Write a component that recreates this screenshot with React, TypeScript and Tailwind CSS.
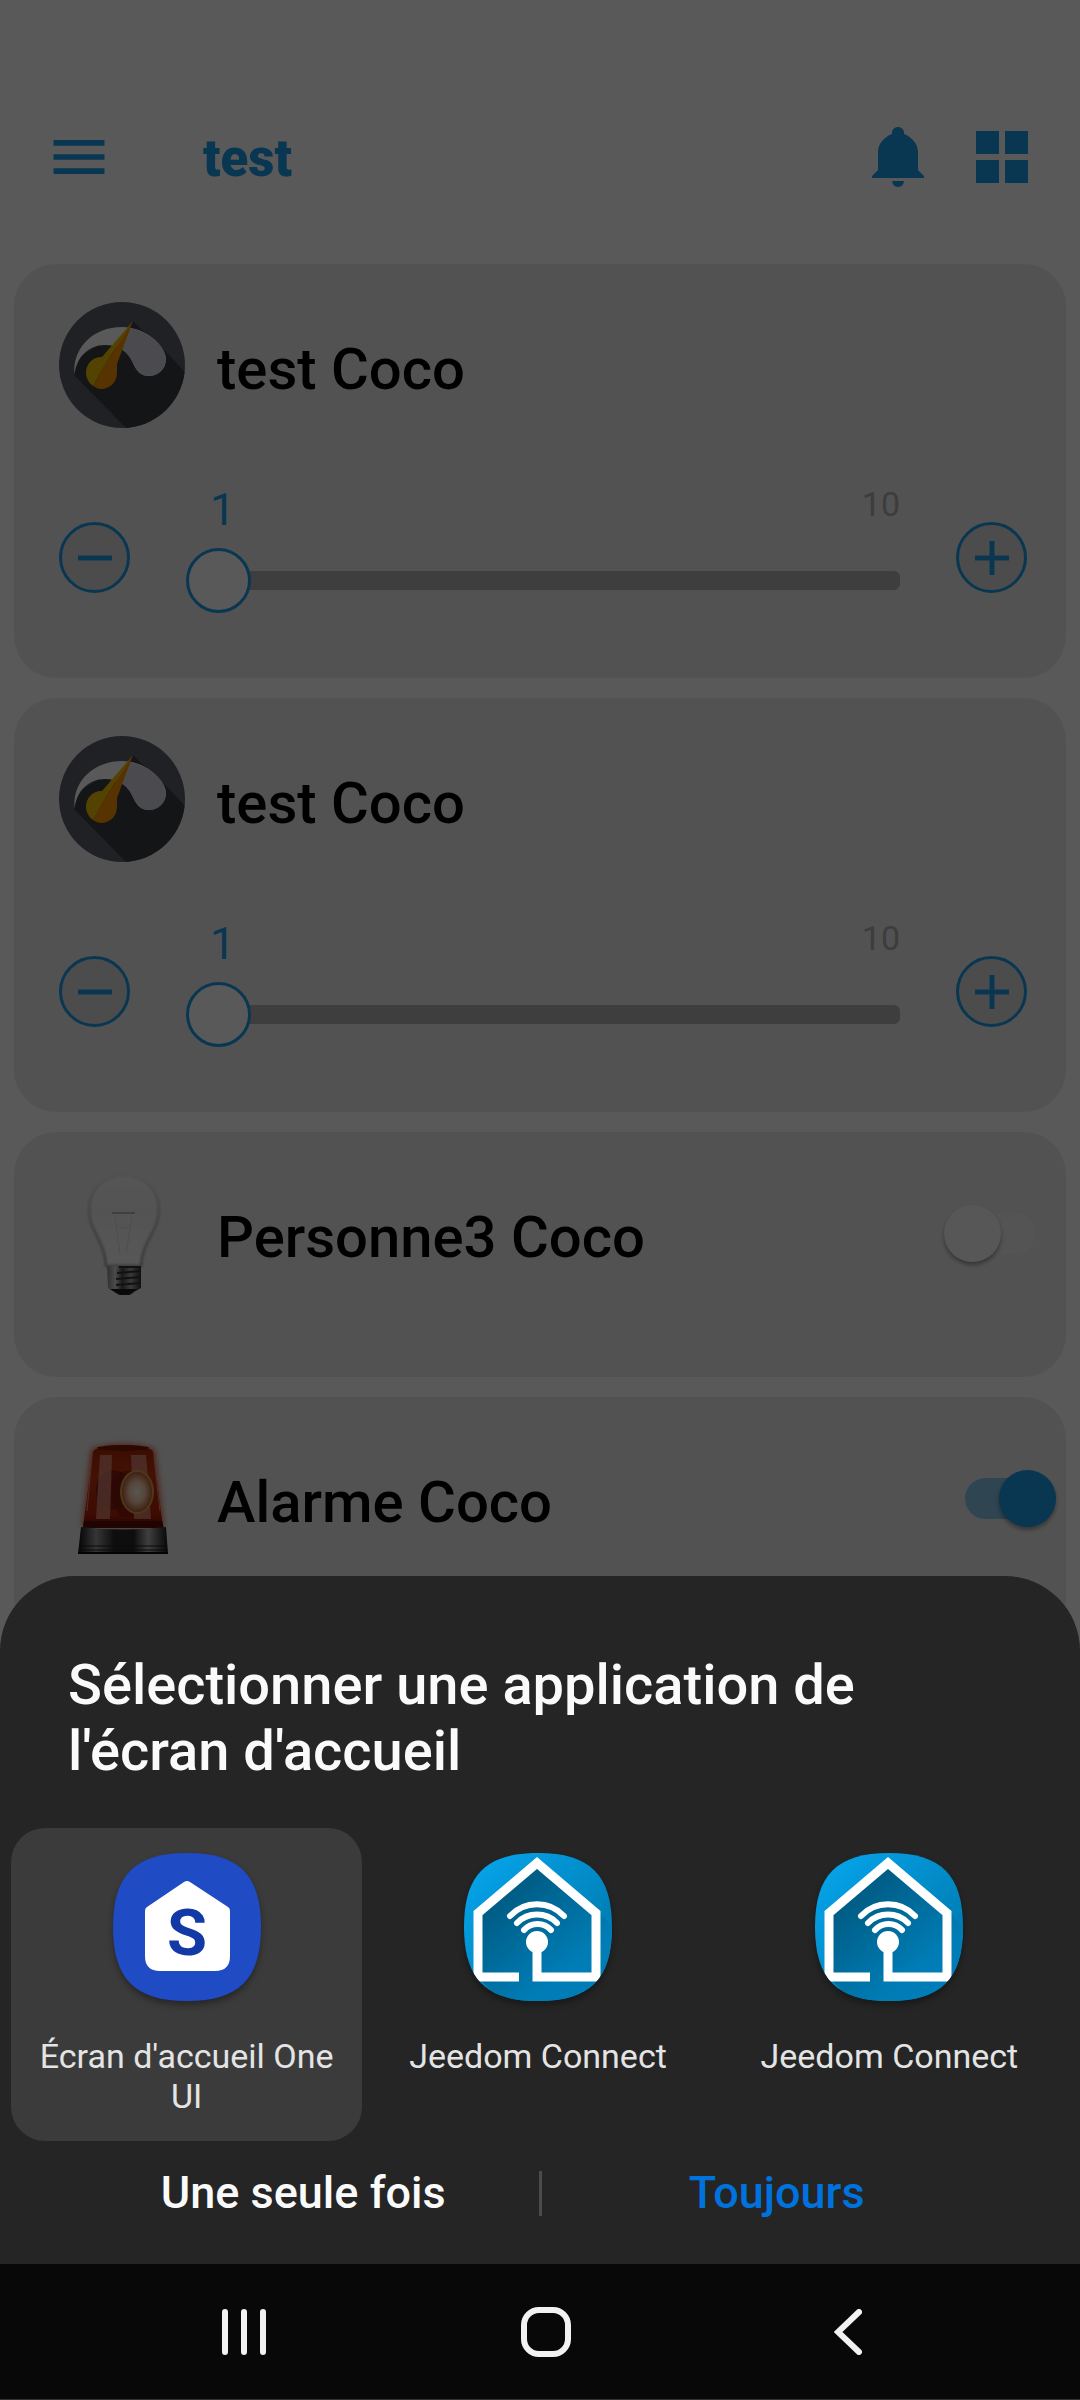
import { useState, type ReactNode } from "react";

function GaugeIcon() {
  return (
    <svg viewBox="0 0 126 126" className="size-[126px] shrink-0" aria-hidden="true">
      <defs>
        <clipPath id="gauge-disc">
          <circle cx="63" cy="63" r="63" />
        </clipPath>
      </defs>
      <g clipPath="url(#gauge-disc)">
        <rect width="126" height="126" fill="#5d5f6a" />
        <path d="M74 19L82 27L107 50L128 72V128H69L15 73L20 55L45 40L68 30Z" fill="#3a3c3f" />
        <path
          d="M15.500 73C13 46 34 25 63 25C88 25 107 45 107 57C107 67 99 74 90 74C81 74 77 68 73 59C68 49 59 43 46 43C29 43 17 56 15.500 73Z"
          fill="#ffffff"
        />
        <path
          d="M71 26C91 30 107 46 107 57C107 67 99 74 90 74C81 74 77 68 73 59C70 53 67 50 62 47Z"
          fill="#d6d8e2"
        />
        <path d="M74 19L43 55C33 55 27 62 27 71C27 76 30 81 34 84L50 56Z" fill="#f0c000" />
        <path d="M74 19L50 56L34 84C37 86 40 87 42 87C51 87 58 80 58 71V62Z" fill="#f59200" />
      </g>
    </svg>
  );
}

function BulbIcon() {
  return (
    <svg viewBox="0 0 126 126" className="size-[126px] shrink-0" aria-hidden="true">
      <defs>
        <linearGradient id="bulb-glass" x1="0" y1="0" x2="0" y2="1">
          <stop offset="0" stopColor="#f4f4f4" />
          <stop offset="0.4" stopColor="#eeeeee" />
          <stop offset="1" stopColor="#fafafa" />
        </linearGradient>
        <linearGradient id="bulb-edge" x1="0" y1="0" x2="0" y2="1">
          <stop offset="0" stopColor="#e6e6e6" />
          <stop offset="0.4" stopColor="#c4c4c4" />
          <stop offset="1" stopColor="#a8a8a8" />
        </linearGradient>
        <linearGradient id="bulb-cap" x1="0" x2="1">
          <stop offset="0" stopColor="#8a8a8a" />
          <stop offset="0.25" stopColor="#d8d8d8" />
          <stop offset="0.45" stopColor="#4a4a4a" />
          <stop offset="0.7" stopColor="#a5a5a5" />
          <stop offset="1" stopColor="#2e2e2e" />
        </linearGradient>
        <filter id="bulb-soften" x="-10%" y="-10%" width="120%" height="120%">
          <feGaussianBlur stdDeviation="1.2" />
        </filter>
      </defs>
      <path
        d="M65 5C86 5 100 20 100 40C100 61 83 71 82 96H47C46 71 30 61 30 40C30 20 44 5 65 5Z"
        fill="url(#bulb-glass)"
        stroke="url(#bulb-edge)"
        strokeWidth="3"
        filter="url(#bulb-soften)"
      />
      <path d="M53 43H76" stroke="#b4b4b4" strokeWidth="2" />
      <path d="M56 47L61 84M73 47L67 84M60 58H70" stroke="#dddddd" strokeWidth="1" fill="none" />
      <path d="M48 96H82V118L75 122L72 125H60L55 122L49 118Z" fill="url(#bulb-cap)" />
      <path d="M60 97H82M58 103L82 101M57 109L82 107M57 115L82 113" stroke="#333333" strokeWidth="2" />
      <path d="M51 119H79L73 123L70 125H61L57 123Z" fill="#1c1c1c" />
    </svg>
  );
}

function SirenIcon() {
  return (
    <svg viewBox="0 0 126 126" className="size-[126px] shrink-0" aria-hidden="true">
      <defs>
        <linearGradient id="siren-dome" x1="0" x2="0" y1="0" y2="1">
          <stop offset="0" stopColor="#a62300" />
          <stop offset="0.35" stopColor="#c03410" />
          <stop offset="0.85" stopColor="#b02208" />
          <stop offset="1" stopColor="#6b0a00" />
        </linearGradient>
        <radialGradient id="siren-lamp">
          <stop offset="0" stopColor="#fff6e6" />
          <stop offset="0.5" stopColor="#f3c8a8" />
          <stop offset="1" stopColor="#b4502c" />
        </radialGradient>
        <linearGradient id="siren-base" x1="0" x2="1">
          <stop offset="0" stopColor="#0c0c0c" />
          <stop offset="0.2" stopColor="#9a9a9a" />
          <stop offset="0.4" stopColor="#2c2a28" />
          <stop offset="0.62" stopColor="#2c2a28" />
          <stop offset="0.78" stopColor="#b4b4b4" />
          <stop offset="1" stopColor="#141414" />
        </linearGradient>
        <filter id="siren-glow" x="-20%" y="-20%" width="140%" height="140%">
          <feGaussianBlur stdDeviation="3" />
        </filter>
      </defs>
      <path d="M32 14Q64 4 96 14L105 92H23Z" fill="#d9604a" filter="url(#siren-glow)" />
      <path d="M34 17C36 8 92 8 94 17L104 92H24Z" fill="url(#siren-dome)" />
      <ellipse cx="64" cy="13" rx="26" ry="3" fill="#7c1c04" />
      <ellipse cx="54" cy="55" rx="17" ry="20" fill="#8a1a10" />
      <path d="M64 36C50 42 48 66 62 82H76V36Z" fill="#7a1208" opacity="0.6" />
      <path d="M41 20H53L51 84H37Z" fill="#e79a8c" opacity="0.7" />
      <path d="M72 20H87L92 84H75Z" fill="#e79a8c" opacity="0.7" />
      <path d="M33 22L28 76M95 22L101 76" stroke="#e88470" strokeWidth="1" />
      <ellipse cx="78" cy="57" rx="16" ry="21" fill="url(#siren-lamp)" stroke="#d8a04c" strokeWidth="2" />
      <path d="M25 86H103L105 93H24Z" fill="#5c0c04" />
      <path d="M22 92Q64 97 107 92L109 119H19Z" fill="url(#siren-base)" />
      <path d="M20 111H108M20 115H109" stroke="#1c1c1c" strokeWidth="1" />
      <path d="M19 118H109" stroke="#0a0a0a" strokeWidth="2" />
    </svg>
  );
}

function BellIcon() {
  return (
    <svg viewBox="0 0 52 60" className="h-[60px] w-[52px]" fill="currentColor" aria-hidden="true">
      <path d="M26 0A6 6 0 0 1 32 7C40 10 46 17 46 25V43L52 49V51H0V49L6 43V25C6 17 12 10 20 7A6 6 0 0 1 26 0Z" />
      <path d="M20 54H32A6 6 0 0 1 20 54Z" />
    </svg>
  );
}

function AppIconOneUi() {
  return (
    <svg viewBox="0 0 148 148" className="size-[148px] drop-shadow-[0_4px_3px_rgba(0,0,0,0.35)]" aria-hidden="true">
      <path d="M74 0C126 0 148 22 148 74S126 148 74 148 0 126 0 74 22 0 74 0Z" fill="#1f4bc5" />
      <path
        d="M71 29Q74 27 77 29L115 54Q117 55 117 58V103Q117 118 102 118H47Q32 118 32 103V58Q32 55 34 54Z"
        fill="#ffffff"
      />
      <text x="74" y="102" textAnchor="middle" fontSize="65" className="fill-[#1239a5] font-bold">
        S
      </text>
    </svg>
  );
}

function AppIconJeedom({ id }: { id: string }) {
  return (
    <svg viewBox="0 0 148 148" className="size-[148px] drop-shadow-[0_4px_3px_rgba(0,0,0,0.35)]" aria-hidden="true">
      <defs>
        <linearGradient id={`${id}-sky`} x1="0" y1="0" x2="1" y2="1">
          <stop offset="0.1" stopColor="#05a2e8" />
          <stop offset="0.7" stopColor="#0080b8" />
        </linearGradient>
        <linearGradient id={`${id}-shade`} x1="0" y1="0" x2="0.8" y2="1">
          <stop offset="0.1" stopColor="#005478" />
          <stop offset="0.8" stopColor="#007db6" />
        </linearGradient>
        <clipPath id={`${id}-clip`}>
          <path d="M74 0C126 0 148 22 148 74S126 148 74 148 0 126 0 74 22 0 74 0Z" />
        </clipPath>
      </defs>
      <g clipPath={`url(#${id}-clip)`}>
        <rect width="148" height="148" fill={`url(#${id}-sky)`} />
        <path d="M14 60L73 9L132 58L148 72V148H38L14 125Z" fill={`url(#${id}-shade)`} />
        <g fill="none" stroke="#ffffff">
          <path d="M55 124H14V60L73 10L132 60V124H73V90" strokeWidth="9" />
          <g strokeWidth="6" strokeLinecap="round">
            <path d="M46 63A37 37 0 0 1 100 63" />
            <path d="M53 70A28 28 0 0 1 93 70" />
            <path d="M60 77A18 18 0 0 1 87 77" />
          </g>
        </g>
        <circle cx="73" cy="89" r="11" fill="#ffffff" />
      </g>
    </svg>
  );
}

function Card({ children, className }: { children: ReactNode; className: string }) {
  return <section className={`rounded-[42px] bg-[#ececec] pt-[38px] pl-[45px] ${className}`}>{children}</section>;
}

function CardHeading({ icon, title }: { icon: ReactNode; title: string }) {
  return (
    <div className="flex min-w-0 flex-1 items-center gap-8">
      {icon}
      <h2 className="pt-2 text-[58px] leading-[66px] font-medium text-black">{title}</h2>
    </div>
  );
}

const roundButton =
  "mb-5 flex size-[71px] shrink-0 items-center justify-center rounded-full border-3 border-[#1c9de9] bg-[#dadada] text-[#1c9de9]";

function SliderCard({ title }: { title: string }) {
  const [value, setValue] = useState(1);
  return (
    <Card className="pr-[39px] pb-[65px]">
      <CardHeading icon={<GaugeIcon />} title={title} />
      <div className="mt-14 flex items-end gap-14">
        <button className={roundButton} aria-label="Diminuer" onClick={() => setValue(Math.max(1, value - 1))}>
          <svg viewBox="0 0 34 34" className="size-[34px]" stroke="currentColor" strokeWidth="5" aria-hidden="true">
            <path d="M0 17H34" />
          </svg>
        </button>
        <div className="min-w-0 flex-1">
          <div className="flex h-16 items-start justify-between pl-6">
            <output className="text-[45px] leading-[52px] text-[#1c9de9]">{value}</output>
            <span className="text-[34px] leading-10 text-[#aeaeae]">10</span>
          </div>
          <input
            type="range"
            min={1}
            max={10}
            value={value}
            aria-label={title}
            onChange={(e) => setValue(Number(e.target.value))}
            className="block h-[65px] w-full appearance-none bg-transparent [&::-webkit-slider-runnable-track]:h-[19px] [&::-webkit-slider-runnable-track]:rounded-md [&::-webkit-slider-runnable-track]:bg-[linear-gradient(to_right,transparent_32px,#b1b1b1_32px)] [&::-webkit-slider-thumb]:-mt-[23px] [&::-webkit-slider-thumb]:size-[65px] [&::-webkit-slider-thumb]:appearance-none [&::-webkit-slider-thumb]:rounded-full [&::-webkit-slider-thumb]:border-3 [&::-webkit-slider-thumb]:border-[#1c9de9] [&::-webkit-slider-thumb]:bg-white"
          />
        </div>
        <button className={roundButton} aria-label="Augmenter" onClick={() => setValue(Math.min(10, value + 1))}>
          <svg viewBox="0 0 34 34" className="size-[34px]" stroke="currentColor" strokeWidth="5" aria-hidden="true">
            <path d="M0 17H34M17 0V34" />
          </svg>
        </button>
      </div>
    </Card>
  );
}

function SwitchCard({
  title,
  icon,
  initial,
  className,
}: {
  title: string;
  icon: ReactNode;
  initial: boolean;
  className: string;
}) {
  const [on, setOn] = useState(initial);
  return (
    <Card className={`flex items-center pb-[81px] ${className}`}>
      <CardHeading icon={icon} title={title} />
      <input
        type="checkbox"
        role="switch"
        aria-label={title}
        checked={on}
        onChange={(e) => setOn(e.target.checked)}
        className="grid h-[57px] w-[91px] shrink-0 appearance-none items-center before:col-start-1 before:row-start-1 before:h-[41px] before:rounded-full before:bg-[#f0f0f0] after:col-start-1 after:row-start-1 after:size-[57px] after:rounded-full after:bg-[#f8f8f8] after:shadow-[0_3px_4px_rgba(0,0,0,0.35)] checked:before:bg-[#86c5ea] checked:after:justify-self-end checked:after:bg-[#1c9de9]"
      />
    </Card>
  );
}

function AppChoice({ icon, label, selected = false }: { icon: ReactNode; label: string; selected?: boolean }) {
  return (
    <button
      aria-pressed={selected}
      className={`flex flex-col items-center rounded-[34px] px-6 py-[25px] ${selected ? "bg-[#3b3b3b]" : ""}`}
    >
      {icon}
      <span className="mt-[35px] text-[34px] leading-10 text-[#e4e4e4]">{label}</span>
    </button>
  );
}

export default function App() {
  return (
    <div className="grid min-h-screen bg-white font-['Roboto',sans-serif]">
      <div className="col-start-1 row-start-1">
        <header className="flex items-center pt-[123px] pr-11 pb-[73px] pl-[45px] text-[#1c9de9]">
          <button aria-label="Menu" className="size-[68px]">
            <svg viewBox="0 0 24 24" className="size-[68px]" fill="currentColor" aria-hidden="true">
              <path d="M3 6h18v2H3zM3 11h18v2H3zM3 16h18v2H3z" />
            </svg>
          </button>
          <h1 className="ml-[90px] flex-1 pt-1 text-[51px] leading-[62px] font-black">test</h1>
          <div className="flex gap-9">
            <button aria-label="Notifications" className="flex size-[68px] items-center justify-center">
              <BellIcon />
            </button>
            <button aria-label="Widgets" className="flex size-[68px] items-center justify-center">
              <svg viewBox="0 0 52 52" className="size-[52px]" fill="currentColor" aria-hidden="true">
                <path d="M0 0h23v23H0zM29 0h23v23H29zM0 29h23v23H0zM29 29h23v23H29z" />
              </svg>
            </button>
          </div>
        </header>
        <main className="flex flex-col gap-5 px-[14px]">
          <SliderCard title="test Coco" />
          <SliderCard title="test Coco" />
          <SwitchCard title="Personne3 Coco" icon={<BulbIcon />} initial={false} className="pr-[31px]" />
          <SwitchCard title="Alarme Coco" icon={<SirenIcon />} initial={true} className="pr-[10px]" />
        </main>
      </div>

      <div className="z-10 col-start-1 row-start-1 flex flex-col justify-end bg-black/65">
        <div role="dialog" aria-labelledby="sheet-title" className="rounded-t-[75px] bg-[#252525] pt-[76px]">
          <h2 id="sheet-title" className="px-[68px] text-[56px] leading-[66px] font-medium text-[#fafafa]">
            Sélectionner une application de l'écran d'accueil
          </h2>
          <div className="mt-11 grid grid-cols-3 pr-[15px] pl-[11px]">
            <AppChoice icon={<AppIconOneUi />} label="Écran d'accueil One UI" selected />
            <AppChoice icon={<AppIconJeedom id="jeedom-a" />} label="Jeedom Connect" />
            <AppChoice icon={<AppIconJeedom id="jeedom-b" />} label="Jeedom Connect" />
          </div>
          <div className="flex items-center px-[68px] pt-[27px] pb-[46px] text-[45px] leading-[50px] font-medium">
            <button className="flex-1 text-[#fafafa]">Une seule fois</button>
            <span className="h-[45px] w-[3px] bg-[#4b4b4b]" />
            <button className="flex-1 text-[#0072de]">Toujours</button>
          </div>
        </div>
        <nav className="grid h-[136px] grid-cols-3 items-center justify-items-center border-b border-[#333333] bg-[#080808] pr-[81px] pl-[93px] text-[#f2f2f2]">
          <button aria-label="Applications récentes">
            <svg viewBox="0 0 44 46" className="h-[46px] w-[44px]" stroke="currentColor" strokeWidth="6" strokeLinecap="round" aria-hidden="true">
              <path d="M3 3V43M22 3V43M41 3V43" />
            </svg>
          </button>
          <button aria-label="Accueil">
            <svg viewBox="0 0 50 50" className="size-[50px]" fill="none" stroke="currentColor" strokeWidth="6" aria-hidden="true">
              <rect x="3" y="3" width="44" height="44" rx="15" />
            </svg>
          </button>
          <button aria-label="Retour">
            <svg viewBox="0 0 28 46" className="h-[46px] w-[28px]" fill="none" stroke="currentColor" strokeWidth="6" strokeLinecap="round" aria-hidden="true">
              <path d="M25 3L4 23L25 43" />
            </svg>
          </button>
        </nav>
      </div>
    </div>
  );
}
